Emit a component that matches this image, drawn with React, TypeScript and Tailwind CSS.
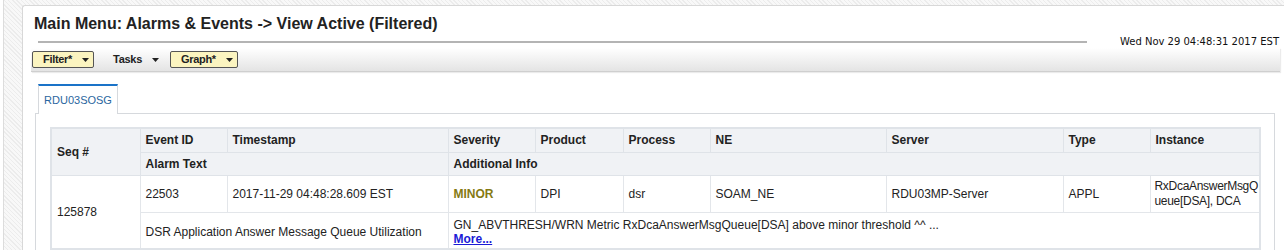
import { ReactNode } from 'react'

const COLS = [89, 87, 221, 87, 88, 87, 176, 177, 87, 110]

const Caret = () => (
  <svg width="7" height="4" viewBox="0 0 7 4" className="shrink-0 ml-[10px]">
    <path d="M0 0h7L3.5 4z" fill="#222" />
  </svg>
)

const ToolButton = ({ label, active }: { label: string; active?: boolean }) => (
  <div
    className={`flex items-center h-[17px] text-[11px] font-bold text-[#222] pl-[10px] pr-[4px] shrink-0 tracking-[-0.3px] border rounded-[2px] ${
      active ? 'border-[#555] bg-[#fbf4c0]' : 'border-transparent'
    }`}
  >
    <span>{label}</span>
    <Caret />
  </div>
)

const Th = ({ children, className = '', ...rest }: { children?: ReactNode; className?: string; rowSpan?: number; colSpan?: number }) => (
  <th
    {...rest}
    className={`border border-[#dfe3e8] bg-[#f0f2f5] text-left font-bold text-[12px] text-[#222] px-[5px] align-middle ${className}`}
  >
    {children}
  </th>
)

const Td = ({ children, className = '', ...rest }: { children?: ReactNode; className?: string; rowSpan?: number; colSpan?: number }) => (
  <td
    {...rest}
    className={`border border-[#e3e6ea] bg-white text-left text-[12px] text-[#222] px-[5px] align-middle ${className}`}
  >
    {children}
  </td>
)

export default function App() {
  return (
    <div className="flex h-[250px] w-[1284px] overflow-hidden bg-[repeating-linear-gradient(45deg,#f8f8f8_0px,#f8f8f8_2px,#ececec_2px,#ececec_3px)] font-['Liberation_Sans',Arial,sans-serif]">
      <div className="w-[4px] bg-white border-r border-[#dcdcdc] shrink-0" />
      <div className="ml-[18px] mt-[5px] flex-1 min-h-0 bg-white border-l border-t border-[#d8d8d8] rounded-tl-[3px] flex flex-col">
        {/* header */}
        <div className="flex items-end pr-[5px] shrink-0">
          <div className="flex flex-col w-[1064px]">
            <h1 className="pl-[11px] pt-[8px] text-[16px] leading-[20px] font-bold text-[#222]">
              Main Menu: Alarms &amp; Events -&gt; View Active (Filtered)
            </h1>
            <div className="ml-[15px] mt-[7px] h-[2px] bg-[#b4b4b4]" />
          </div>
          <div className="flex-1 text-right text-[10px] leading-[10px] text-[#111] font-['DejaVu_Sans',Verdana,sans-serif] mb-[-4px]">
            Wed Nov 29 04:48:31 2017 EST
          </div>
        </div>

        {/* toolbar */}
        <div className="shrink-0 ml-[8px] mr-[4px] mt-[5px] h-[24px] flex items-center pl-[1px] bg-linear-to-b from-white to-[#e4e4e4] border-b border-[#cfcfcf] shadow-[1px_1px_1px_rgba(0,0,0,0.08)]">
          <ToolButton label="Filter*" active />
          <div className="w-[8px]" />
          <ToolButton label="Tasks" />
          <div className="w-[6px]" />
          <ToolButton label="Graph*" active />
        </div>

        {/* tabs */}
        <div className="shrink-0 ml-[15px] mt-[12px] flex">
          <div className="h-[30px] w-[80px] border-t-2 border-t-[#1a73c8] border-x border-x-[#d6d9dd] bg-white flex items-center justify-center text-[11px] text-[#2a66a0] relative z-10 -mb-px">
            RDU03SOSG
          </div>
        </div>
        <div className="ml-[12px] w-[1240px] flex-1 min-h-0 border-l border-t border-r border-[#d6d9dd] pt-[13px] pl-[14px]">
          <table className="table-fixed border-collapse border-2 border-[#dfe3e8]" style={{ width: COLS.reduce((a, b) => a + b, 0) }}>
            <colgroup>
              {COLS.map((w, i) => (
                <col key={i} style={{ width: w }} />
              ))}
            </colgroup>
            <thead>
              <tr className="h-[24px]">
                <Th rowSpan={2}>Seq #</Th>
                <Th>Event ID</Th>
                <Th>Timestamp</Th>
                <Th>Severity</Th>
                <Th>Product</Th>
                <Th>Process</Th>
                <Th>NE</Th>
                <Th>Server</Th>
                <Th>Type</Th>
                <Th>Instance</Th>
              </tr>
              <tr className="h-[23px]">
                <Th colSpan={2}>Alarm Text</Th>
                <Th colSpan={7}>Additional Info</Th>
              </tr>
            </thead>
            <tbody>
              <tr className="h-[37px]">
                <Td rowSpan={2}>125878</Td>
                <Td>22503</Td>
                <Td>2017-11-29 04:48:28.609 EST</Td>
                <Td className="font-bold !text-[#857a12]">MINOR</Td>
                <Td>DPI</Td>
                <Td>dsr</Td>
                <Td>SOAM_NE</Td>
                <Td>RDU03MP-Server</Td>
                <Td>APPL</Td>
                <Td className="leading-[15px] !px-[4px] whitespace-nowrap tracking-[-0.3px]">
                  RxDcaAnswerMsgQ
                  <br />
                  ueue[DSA], DCA
                </Td>
              </tr>
              <tr className="h-[37px]">
                <Td colSpan={2} className="pt-[3px]">DSR Application Answer Message Queue Utilization</Td>
                <Td colSpan={7} className="leading-[14px] pt-[3px]">
                  GN_ABVTHRESH/WRN Metric RxDcaAnswerMsgQueue[DSA] above minor threshold ^^ ...
                  <br />
                  <a className="font-bold text-[#1b1bd6] underline">More...</a>
                </Td>
              </tr>
            </tbody>
          </table>
        </div>
      </div>
    </div>
  )
}
